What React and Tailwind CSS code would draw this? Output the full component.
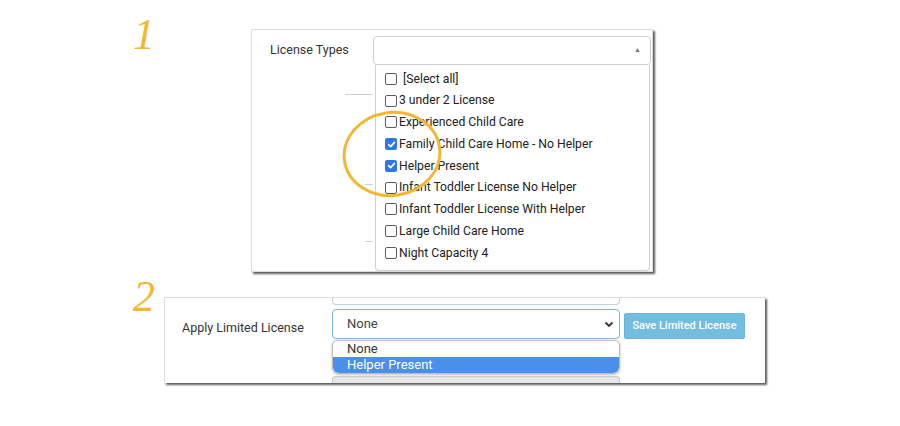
const licenseTypes = [
  { label: "[Select all]", checked: false, wide: true },
  { label: "3 under 2 License", checked: false },
  { label: "Experienced Child Care", checked: false },
  { label: "Family Child Care Home - No Helper", checked: true },
  { label: "Helper Present", checked: true },
  { label: "Infant Toddler License No Helper", checked: false },
  { label: "Infant Toddler License With Helper", checked: false },
  { label: "Large Child Care Home", checked: false },
  { label: "Night Capacity 4", checked: false },
];

function Checkbox({ checked }) {
  if (checked) {
    return (
      <span className="w-[12px] h-[12px] rounded-[2px] bg-[#2f76e8] flex items-center justify-center shrink-0">
        <svg width="9" height="9" viewBox="0 0 10 10">
          <polyline points="1.8,5.2 4,7.4 8.3,2.6" fill="none" stroke="#fff" strokeWidth="1.8" strokeLinecap="round" strokeLinejoin="round" />
        </svg>
      </span>
    );
  }
  return <span className="w-[12px] h-[12px] rounded-[2px] border border-[#5c5c5c] bg-white shrink-0" />;
}

function App() {
  return (
    <div className="relative w-[900px] h-[426px] bg-white overflow-hidden font-['Roboto',sans-serif]">
      {/* Step 1 */}
      <div className="flex items-start pl-[133px] pt-[12px]">
        <div className="w-[118px] text-[44px] leading-[46px] italic text-[#f4b733] font-['Liberation_Serif',serif]">
          1
        </div>

        <div className="mt-[17px] w-[402px] h-[243px] bg-white border border-[#dcdcdc] shadow-[2px_2px_2px_rgba(0,0,0,0.65)] flex">
          {/* Label column */}
          <div className="w-[121px] pl-[18px] pt-[12px] flex flex-col">
            <span className="text-[12.5px] leading-[16px] text-[#333]">License Types</span>
            <div className="mt-[36px] ml-auto w-[28px] h-px bg-[#d0d0d0]" />
            <div className="mt-[89px] ml-auto w-[8px] h-px bg-[#d0d0d0]" />
            <div className="mt-[56px] ml-auto w-[8px] h-px bg-[#d0d0d0]" />
          </div>

          {/* Multi select */}
          <div className="w-[278px] pt-[6px]">
            <div className="h-[29px] border border-[#cfcfcf] rounded-[4px] flex items-center justify-end pr-[9px]">
              <span className="text-[7px] text-[#777]">▲</span>
            </div>
            <div className="ml-[2px] w-[275px] h-[206px] border border-t-0 border-[#cfcfcf] rounded-b-[4px] pt-[3px] bg-white">
              {licenseTypes.map((item) => (
                <div key={item.label} className="h-[21.75px] flex items-center pl-[9px]">
                  <Checkbox checked={item.checked} />
                  <span className={`${item.wide ? "ml-[6px]" : "ml-[2px]"} text-[12.2px] text-[#222] whitespace-nowrap`}>
                    {item.label}
                  </span>
                </div>
              ))}
            </div>
          </div>
        </div>
      </div>

      {/* Step 2 */}
      <div className="flex items-start pl-[133px]">
        <div className="w-[31px] pt-[2px] text-[44px] leading-[46px] italic text-[#f4b733] font-['Liberation_Serif',serif]">
          2
        </div>

        <div className="mt-[25px] w-[601px] h-[86px] bg-white border-t border-l border-[#dcdcdc] shadow-[2px_2px_2px_rgba(0,0,0,0.65)] flex">
          <div className="w-[167px] pl-[17px] pt-[17px]">
            <span className="text-[12.5px] leading-[16px] text-[#333]">Apply Limited License</span>
          </div>

          <div className="w-[288px] flex flex-col">
            <div className="h-[7px] border-x border-b border-[#cfcfcf] rounded-b-[4px]" />
            <div className="mt-[4px] h-[30px] border border-[#80b4e6] rounded-[4px] flex items-center justify-between pl-[14px] pr-[5px]">
              <span className="text-[13px] text-[#444]">None</span>
              <svg width="10" height="7" viewBox="0 0 10 7">
                <polyline points="1.5,1.5 5,5 8.5,1.5" fill="none" stroke="#333" strokeWidth="1.8" />
              </svg>
            </div>
            <div className="mt-[1px] h-[34px] border border-[#bdbdbd] rounded-[7px] rounded-t-[5px] overflow-hidden bg-white shadow-[0_1px_3px_rgba(0,0,0,0.25)]">
              <div className="h-[16px] pl-[14px] text-[13px] leading-[16px] text-[#333]">None</div>
              <div className="h-[16px] pl-[14px] text-[13px] leading-[16px] text-white bg-[#4a8fe9]">Helper Present</div>
            </div>
            <div className="mt-[2px] flex-1 border border-b-0 border-[#c8c8c8] rounded-t-[4px] bg-[#e6e6e6]" />
          </div>

          <div className="pl-[4px] pt-[14px]">
            <button className="w-[121px] h-[26px] bg-[#72bde0] border border-[#69b5d9] rounded-[2px] text-white text-[11px] font-medium">
              Save Limited License
            </button>
          </div>
        </div>
      </div>

      {/* Highlight circle */}
      <svg className="absolute left-[342px] top-[110px]" width="102" height="90" viewBox="0 0 102 90">
        <ellipse cx="50" cy="44" rx="48" ry="41.5" fill="none" stroke="#f4b733" strokeWidth="3" transform="rotate(-8 50 44)" />
      </svg>
    </div>
  );
}

export default App;
